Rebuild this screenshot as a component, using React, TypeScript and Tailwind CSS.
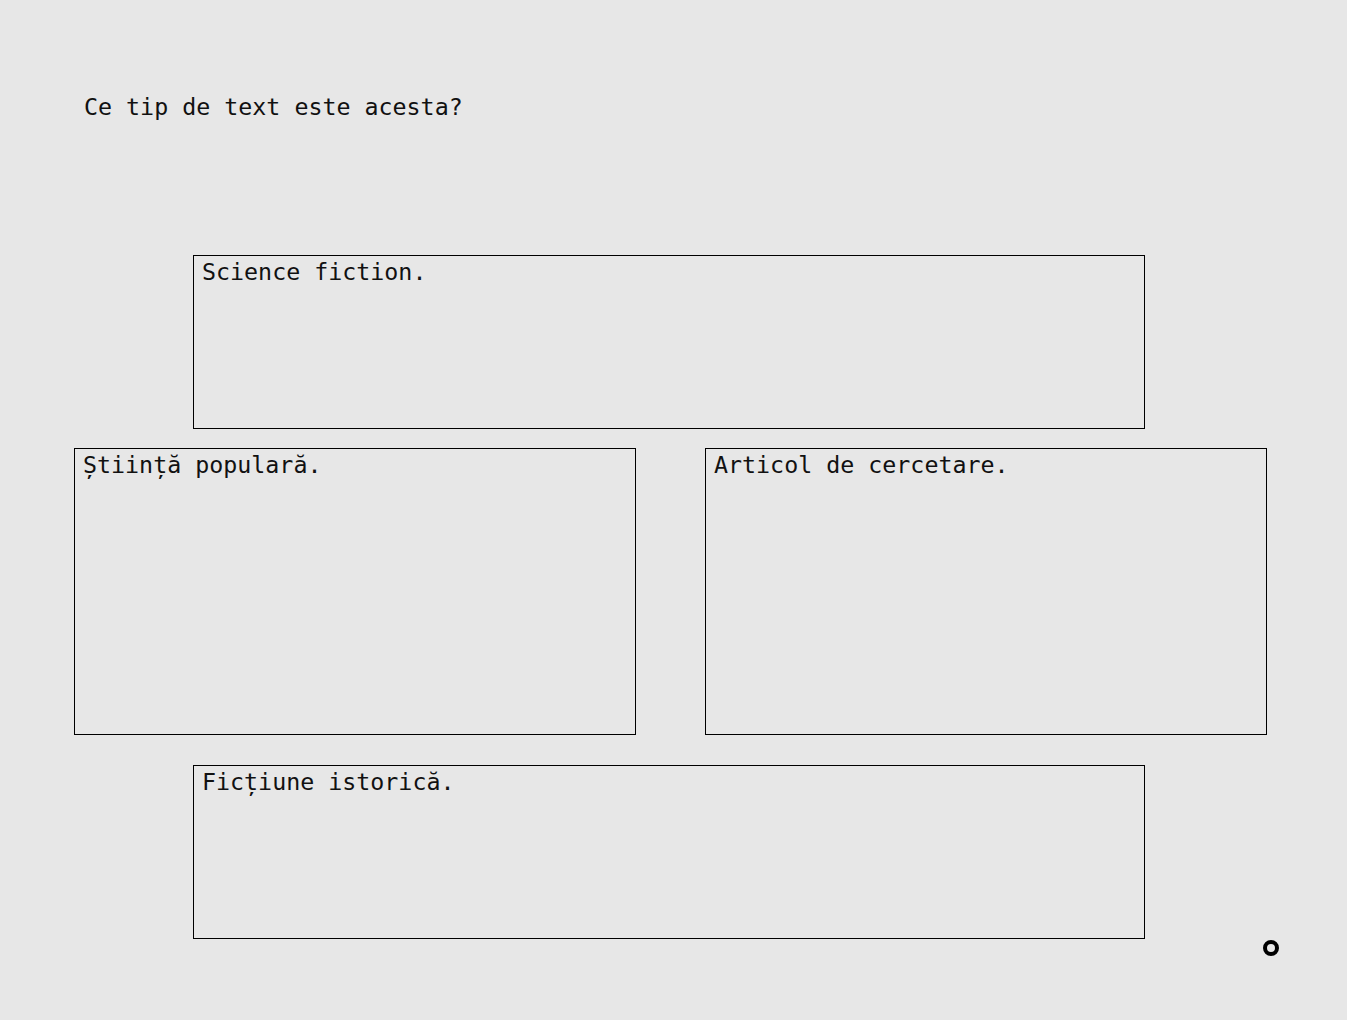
export default function App() {
  const font = { fontFamily: '"DejaVu Sans Mono", "Liberation Mono", monospace' };
  return (
    <div
      className="min-h-[1020px] w-full bg-[#e7e7e7] text-[#111] text-[23.3px] leading-[28px]"
      style={font}
    >
      <div className="pt-[93px] pl-[84px]">Ce tip de text este acesta?</div>

      <div className="mt-[134px] ml-[74px] w-[1193px] flex flex-col">
        <div className="ml-[119px] w-[952px] h-[174px] border border-black px-[8px] pt-[2px]">
          Science fiction.
        </div>

        <div className="mt-[19px] flex gap-[69px]">
          <div className="w-[562px] h-[287px] border border-black px-[8px] pt-[2px]">
            Știință populară.
          </div>
          <div className="w-[562px] h-[287px] border border-black px-[8px] pt-[2px]">
            Articol de cercetare.
          </div>
        </div>

        <div className="mt-[30px] ml-[119px] w-[952px] h-[174px] border border-black px-[8px] pt-[2px]">
          Ficțiune istorică.
        </div>
      </div>

      <div className="absolute left-[1263px] top-[940px] w-[16px] h-[16px] rounded-full border-[4px] border-black" />
    </div>
  );
}
